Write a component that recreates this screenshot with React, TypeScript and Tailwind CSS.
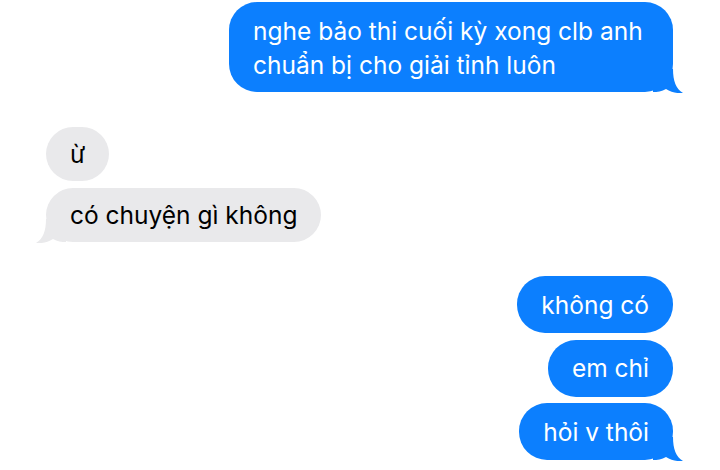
import React from "react";

const BLUE = "#0c7ffe";
const GRAY = "#e9e9eb";

const Tail = ({ side, color }: { side: "left" | "right"; color: string }) => (
  <svg
    width="30"
    height="24"
    viewBox="0 0 30 24"
    className={
      side === "right"
        ? "absolute right-[-10px] bottom-[-1px]"
        : "absolute left-[-10px] bottom-[-1px] -scale-x-100"
    }
  >
    <path
      d="M0 0 H20 C20 12 23 20 30 24 C25 24.6 18.5 23.6 13 20 C9 22.5 4 23 0 23 Z"
      fill={color}
    />
  </svg>
);

const Bubble = ({
  children,
  me,
  tail,
  className = "",
}: {
  children: React.ReactNode;
  me?: boolean;
  tail?: boolean;
  className?: string;
}) => (
  <div
    className={`relative rounded-[28px] px-6 text-[24.5px] leading-[34px] ${
      me ? "self-end bg-[#0c7ffe] text-white" : "self-start bg-[#e9e9eb] text-black"
    } ${className}`}
  >
    {tail && <Tail side={me ? "right" : "left"} color={me ? BLUE : GRAY} />}
    <span className="relative">{children}</span>
  </div>
);

export default function App() {
  return (
    <div
      className="w-[720px] h-[470px] bg-white flex flex-col pl-[46px] pr-[47px] pt-[2px] overflow-hidden"
      style={{ fontFamily: "Inter, 'Noto Sans', sans-serif" }}
    >
      <Bubble me tail className="w-[444px] py-[11px] pt-[12px] pb-[10px]">
        nghe bảo thi cuối kỳ xong clb anh
        <br />
        chuẩn bị cho giải tỉnh luôn
      </Bubble>

      <div className="mt-[35px] flex flex-col gap-[7px]">
        <Bubble className="w-fit py-[10px]">ừ</Bubble>
        <Bubble tail className="w-fit py-[10px]">có chuyện gì không</Bubble>
      </div>

      <div className="mt-[34px] flex flex-col gap-[6.5px]">
        <Bubble me className="w-fit py-[11.5px]">không có</Bubble>
        <Bubble me className="w-fit py-[11.5px]">em chỉ</Bubble>
        <Bubble me tail className="w-fit py-[11.5px]">hỏi v thôi</Bubble>
      </div>
    </div>
  );
}
